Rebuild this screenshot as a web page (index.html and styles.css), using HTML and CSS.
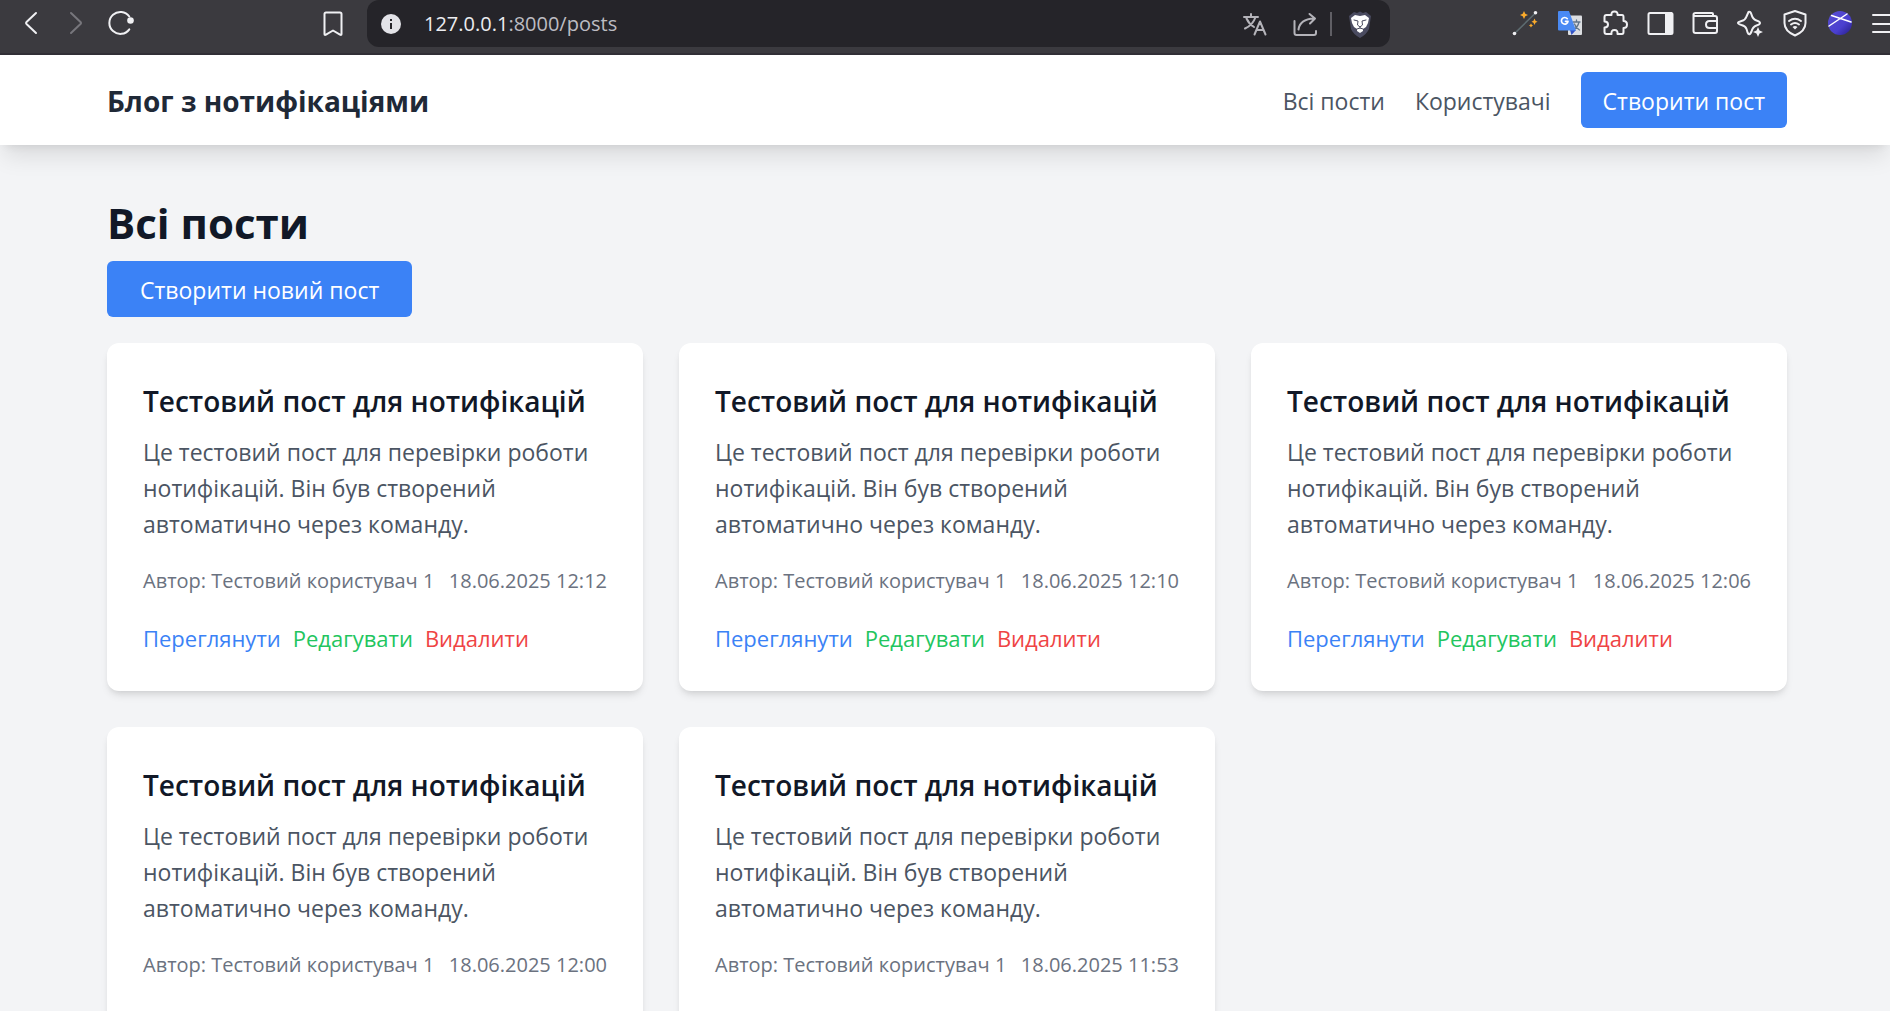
FILE: index.html
```html
<!DOCTYPE html>
<html lang="uk">
<head>
<meta charset="utf-8">
<title>Блог з нотифікаціями</title>
<link rel="stylesheet" href="styles.css">
</head>
<body>
<div class="toolbar" role="toolbar">
  <div class="tool-group">
    <button class="tool" aria-label="Назад"><svg viewBox="0 0 28 28"><path d="M19 4 L9.500 13 Q8.500 14 9.500 15 L19 24"/></svg></button>
    <button class="tool tool-dim" aria-label="Вперед"><svg viewBox="0 0 28 28"><path d="M9 4 L18.500 13 Q19.500 14 18.500 15 L9 24"/></svg></button>
    <button class="tool" aria-label="Оновити"><svg viewBox="0 0 28 28"><path d="M22.300 20.300 A11 11 0 1 1 22.300 7.500"/><circle class="fill" cx="23.500" cy="11.500" r="3.300"/></svg></button>
  </div>
  <button class="tool tool-bookmark" aria-label="Закладка"><svg viewBox="0 0 28 28"><path d="M7 3.500 h14 q1.500 0 1.500 1.500 v20 q0 1.500 -1.500 .6 L14 21.500 L7 25.600 q-1.500 .9 -1.500 -.6 v-20 q0 -1.500 1.500 -1.500 Z"/></svg></button>
  <div class="address">
    <svg class="info" viewBox="0 0 20 20"><circle cx="10" cy="10" r="10" fill="#e3e3e8"/><path d="M10 9 v6 M10 5 v2" stroke="#26252a" stroke-width="2"/></svg>
    <span class="url"><span class="url-host">127.0.0.1</span>:8000/posts</span>
    <button class="tool tool-soft" aria-label="Перекласти"><svg viewBox="0 0 28 28"><path d="M3 7 H17 M10 4 V7 M14.500 7 Q12 15 4 18.500 M5.500 8.500 Q8 14 13 17 M13.500 24.500 L19 11.500 L24.500 24.500 M15.500 20 H22.500"/></svg></button>
    <button class="tool tool-soft tool-share" aria-label="Поділитися"><svg viewBox="0 0 28 28"><path d="M2.500 11 V23 Q2.500 25 4.500 25 H22 Q24 25 24 23 V21 M6.500 19.500 Q8 9 22 8.500 M17.500 4 L23 8.500 L18 13.500"/></svg></button>
    <span class="divider"></span>
    <button class="tool" aria-label="Brave Shields"><svg viewBox="0 0 28 28"><path d="M8 2 L11 3 L14 1.500 L17 3 L20 2 L25 6 L23 19 Q21 24 14 28 Q7 24 5 19 L3 6 Z" fill="#4a4b60" stroke="none"/><path d="M9 5 L14 6 L19 5 L23 8 L22 13 L20 17 L17 19 L17 21 L14 23 L11 21 L11 19 L8 17 L6 13 L5 8 Z" fill="#fff" stroke="none"/><path d="M8 10 L12 11 L11.500 15 L14 17 L16.500 15 L16 11 L20 10 M11 19 L14 18 L17 19 M14 17 V18" stroke="#4a4b60" stroke-width="1"/></svg></button>
  </div>
  <div class="tool-group tool-group-end">
    <button class="tool" aria-label="Чарівна паличка"><svg viewBox="0 0 28 28"><path d="M3.500 24.500 L24.500 4" stroke="#5d6b70" stroke-width="1.600"/><circle class="fill" cx="3.500" cy="24.500" r="1.800"/><circle class="fill" cx="24.500" cy="3.800" r="1.800"/><path class="gold" d="M13 2 L14.300 4.700 L17 6 L14.300 7.300 L13 10 L11.700 7.300 L9 6 L11.700 4.700 Z M23.500 9.500 L24.500 11.800 L26.500 12.800 L24.500 13.800 L23.500 16 L22.500 13.800 L20.500 12.800 L22.500 11.800 Z M20 14.500 L20.800 15.800 L22 16.500 L20.800 17.300 L20 18.500 L19.200 17.300 L18 16.500 L19.200 15.800 Z"/></svg></button>
    <button class="tool" aria-label="Google Translate"><svg viewBox="0 0 28 28"><rect x="12" y="6.500" width="14" height="19.500" rx="1" fill="#dcdee2" stroke="none"/><path d="M17 13 H24 M20.500 11 V13 M23 13 Q22 18 17 21 M18.500 15 Q20 19 23.500 21" stroke="#60758a" stroke-width="1.300"/><path d="M14 21 H20 L15.500 26 Z" fill="#3553c4" stroke="none"/><path d="M3 2 H13 L20 21.500 H3 Q2 21.500 2 20.500 V3 Q2 2 3 2 Z" fill="#4a8af4" stroke="none"/><path d="M11.300 9.700 A3.300 3.300 0 1 0 12 12.300 H9.500" stroke="#fff" stroke-width="1.700"/></svg></button>
    <button class="tool" aria-label="Розширення"><svg viewBox="0 0 28 28"><path d="M3.500 8 Q3.500 6 5.500 6 H10.500 Q10 2.500 13.500 2.500 Q17 2.500 16.500 6 H21 Q22.500 6 22.500 8 V12 Q26 12 26 15.500 Q26 19 22.500 19 V23 Q22.500 25 21 25 H16.500 Q17 21 13.500 21 Q10 21 10.500 25 H5.500 Q3.500 25 3.500 23 V18.500 Q7 18.500 7 15.500 Q7 12.500 3.500 12.500 Z"/></svg></button>
    <button class="tool" aria-label="Бічна панель"><svg viewBox="0 0 28 28"><rect x="2.500" y="4" width="24" height="21" rx="1.500"/><path class="fill" d="M19 3 H26 V25 H19 Z"/></svg></button>
    <button class="tool" aria-label="Гаманець"><svg viewBox="0 0 28 28"><path d="M22 7 V5 Q22 4 21 4 H4.500 Q2.500 4 2.500 5.500 Q2.500 7 4.500 7 H24 Q26 7 26 9 V22 Q26 24 24 24 H4.500 Q2.500 24 2.500 22 V5.500 M26 12 H18.500 Q15 12 15 15.500 Q15 19 18.500 19 H26"/></svg></button>
    <button class="tool" aria-label="Leo AI"><svg viewBox="0 0 28 28"><path d="M12.500 3 Q14.500 2 15.500 5.500 Q16.500 10 20.500 11.500 Q24 12.500 24 14 Q24 15.500 20.500 16.500 Q16.500 18 15.500 22.500 Q14 26 12.500 25 Q11.500 24 10.500 20 Q9.500 17 5.500 16 Q2 15 2 14 Q2 13 5.500 12 Q9.500 11 10.500 7.500 Z"/><path class="fill" d="M22 18 L23.500 21.500 L27 23 L23.500 24.500 L22 28 L20.500 24.500 L17 23 L20.500 21.500 Z"/></svg></button>
    <button class="tool" aria-label="VPN"><svg viewBox="0 0 28 28"><path d="M14 2 L24.500 5.500 V14 Q24.500 22 14 26.500 Q3.500 22 3.500 14 V5.500 Z M8 12 Q14 7.500 20 12 M10 15.500 Q14 12.500 18 15.500"/><path class="fill" d="M11.500 18 Q14 16 16.500 18 L14 20.500 Z"/></svg></button>
    <button class="tool" aria-label="Профіль"><svg viewBox="0 0 28 28"><defs><linearGradient id="orb" x1="0" y1="0" x2="1" y2="1"><stop offset="0" stop-color="#5a4fd0"/><stop offset=".6" stop-color="#4a3fcf"/><stop offset="1" stop-color="#251c86"/></linearGradient></defs><circle cx="14" cy="14" r="12" fill="url(#orb)" stroke="none"/><path d="M3 17 L21 5 M5.500 6.500 L25 13" stroke="#fff" stroke-width="1.500"/></svg></button>
    <button class="tool" aria-label="Меню"><svg viewBox="0 0 28 28"><path d="M2 6 H26 M2 15 H26 M2 23 H26"/></svg></button>
  </div>
</div>
<div class="page">
  <header class="site-header">
    <div class="container header-row">
      <a class="brand" href="#">Блог з нотифікаціями</a>
      <nav class="nav">
        <a class="nav-link" href="#">Всі пости</a>
        <a class="nav-link" href="#">Користувачі</a>
        <a class="button" href="#">Створити пост</a>
      </nav>
    </div>
  </header>
  <main class="container content">
    <h1 class="title">Всі пости</h1>
    <a class="button button-wide" href="#">Створити новий пост</a>
    <div class="posts">
      <article class="card">
        <h2 class="card-title">Тестовий пост для нотифікацій</h2>
        <p class="card-text">Це тестовий пост для перевірки роботи нотифікацій. Він був створений автоматично через команду.</p>
        <div class="meta"><span>Автор: Тестовий користувач 1</span><span>18.06.2025 12:12</span></div>
        <div class="actions"><a class="view" href="#">Переглянути</a><a class="edit" href="#">Редагувати</a><button class="delete">Видалити</button></div>
      </article>
      <article class="card">
        <h2 class="card-title">Тестовий пост для нотифікацій</h2>
        <p class="card-text">Це тестовий пост для перевірки роботи нотифікацій. Він був створений автоматично через команду.</p>
        <div class="meta"><span>Автор: Тестовий користувач 1</span><span>18.06.2025 12:10</span></div>
        <div class="actions"><a class="view" href="#">Переглянути</a><a class="edit" href="#">Редагувати</a><button class="delete">Видалити</button></div>
      </article>
      <article class="card">
        <h2 class="card-title">Тестовий пост для нотифікацій</h2>
        <p class="card-text">Це тестовий пост для перевірки роботи нотифікацій. Він був створений автоматично через команду.</p>
        <div class="meta"><span>Автор: Тестовий користувач 1</span><span>18.06.2025 12:06</span></div>
        <div class="actions"><a class="view" href="#">Переглянути</a><a class="edit" href="#">Редагувати</a><button class="delete">Видалити</button></div>
      </article>
      <article class="card">
        <h2 class="card-title">Тестовий пост для нотифікацій</h2>
        <p class="card-text">Це тестовий пост для перевірки роботи нотифікацій. Він був створений автоматично через команду.</p>
        <div class="meta"><span>Автор: Тестовий користувач 1</span><span>18.06.2025 12:00</span></div>
        <div class="actions"><a class="view" href="#">Переглянути</a><a class="edit" href="#">Редагувати</a><button class="delete">Видалити</button></div>
      </article>
      <article class="card">
        <h2 class="card-title">Тестовий пост для нотифікацій</h2>
        <p class="card-text">Це тестовий пост для перевірки роботи нотифікацій. Він був створений автоматично через команду.</p>
        <div class="meta"><span>Автор: Тестовий користувач 1</span><span>18.06.2025 11:53</span></div>
        <div class="actions"><a class="view" href="#">Переглянути</a><a class="edit" href="#">Редагувати</a><button class="delete">Видалити</button></div>
      </article>
    </div>
  </main>
</div>
</body>
</html>
```
FILE: styles.css
```css
* { box-sizing: border-box; }

body {
  margin: 0;
  height: 100vh;
  display: flex;
  flex-direction: column;
  overflow: hidden;
  background: #f3f4f6;
  font-family: "Open Sans", "Noto Sans", sans-serif;
  font-size: 23px;
  line-height: 36px;
  color: #111827;
}

a { text-decoration: none; }
button { font: inherit; border: 0; padding: 0; background: none; cursor: pointer; }

/* Browser toolbar */
.toolbar {
  flex: none;
  display: flex;
  align-items: flex-start;
  height: 55px;
  padding-left: 17px;
  overflow: hidden;
  background: #3b3a3f;
  border-bottom: 2px solid #312f36;
}
.tool-group { display: flex; gap: 17px; padding-top: 9px; }
.tool-group-end { margin: 0 -9px 0 121px; }
.tool { flex: none; width: 28px; height: 28px; color: #f0f0f3; }
.tool svg { display: block; width: 28px; height: 28px; fill: none; stroke: currentColor; stroke-width: 2; stroke-linecap: round; stroke-linejoin: round; }
.tool .fill { fill: currentColor; stroke: none; }
.tool .gold { fill: #fbab2c; stroke: none; }
.tool-dim { color: #77767c; }
.tool-soft { color: #b4b3b9; }
.tool-bookmark { margin: 9px 20px 0 184px; }
.address {
  flex: 1;
  display: flex;
  align-items: center;
  height: 47px;
  padding: 0 16px 0 14px;
  border-radius: 12px;
  background: #252429;
}
.info { width: 20px; height: 20px; }
.url { flex: 1; margin-left: 23px; font-size: 20px; color: #bdbcc2; }
.url-host { color: #ececf0; }
.tool-share { margin-left: 23px; }
.divider { width: 2px; height: 24px; margin: 0 14px 0 10px; background: #605f65; }

/* Site */
.page { flex: 1; min-height: 0; overflow-y: auto; scrollbar-width: none; }
.container { width: 100%; padding: 0 103px 0 107px; }
.site-header {
  position: relative;
  background: #fff;
  box-shadow: 0 15px 22px -4px rgba(0, 0, 0, .1), 0 6px 9px -6px rgba(0, 0, 0, .1);
}
.header-row { display: flex; align-items: center; justify-content: space-between; height: 90px; }
.brand { padding-top: 2px; font-size: 28px; font-weight: 700; color: #1f2937; }
.nav { display: flex; align-items: center; gap: 30px; }
.nav-link { padding-top: 2px; color: #4b5563; }
.button {
  display: inline-block;
  padding: 11px 22px 9px;
  border-radius: 6px;
  background: #3b82f6;
  color: #fff;
}
.button-wide { padding: 11px 33px 9px; }
.content { padding-top: 51px; padding-bottom: 48px; }
.title { margin: 0 0 11px; font-size: 42px; line-height: 54px; font-weight: 700; }
.posts {
  display: grid;
  grid-template-columns: repeat(3, 1fr);
  gap: 36px;
  margin-top: 26px;
}
.card {
  padding: 37px 36px 35px;
  border-radius: 12px;
  background: #fff;
  box-shadow: 0 6px 9px -2px rgba(0, 0, 0, .1), 0 3px 6px -3px rgba(0, 0, 0, .1);
}
.card-title { margin: 0 0 12px; font-size: 28px; line-height: 42px; font-weight: 600; }
.card-text { margin: 0 0 24px; color: #4b5563; }
.meta {
  display: flex;
  justify-content: space-between;
  margin-bottom: 24px;
  font-size: 20px;
  line-height: 30px;
  color: #6b7280;
  white-space: nowrap;
}
.actions { display: flex; gap: 12px; font-size: 22px; }
.view { color: #3b82f6; }
.edit { color: #22c55e; }
.delete { color: #ef4444; }
```
